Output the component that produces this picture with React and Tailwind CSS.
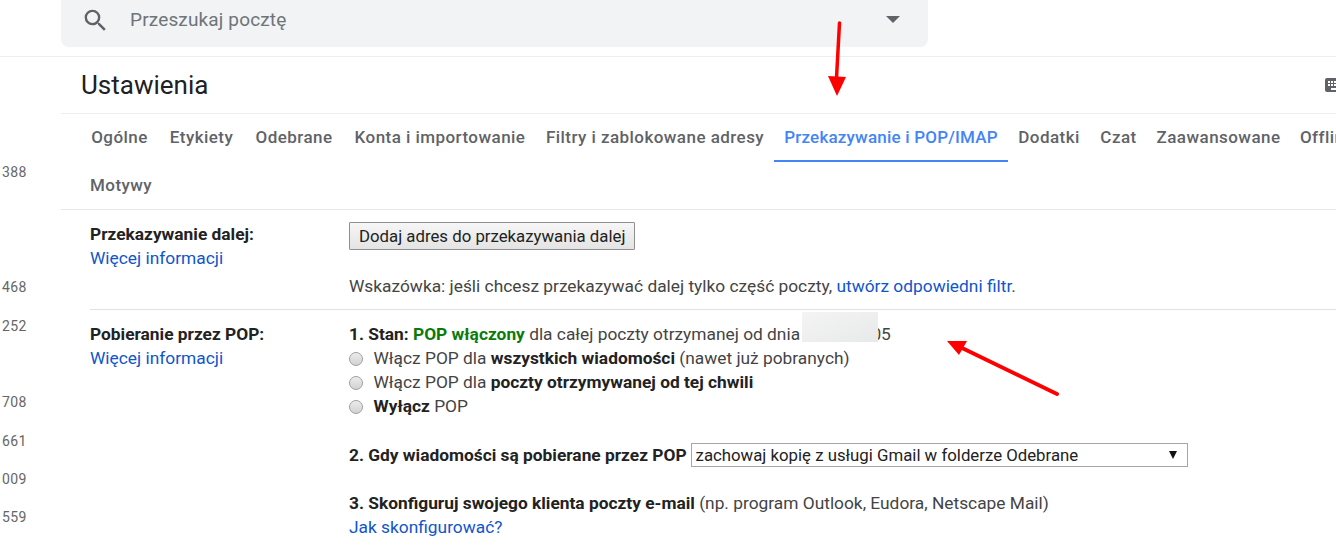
const tabs = [
  { label: "Ogólne", width: "w-[79px]" },
  { label: "Etykiety", width: "w-[85px]" },
  { label: "Odebrane", width: "w-[100px]" },
  { label: "Konta i importowanie", width: "w-[192px]" },
  { label: "Filtry i zablokowane adresy", width: "w-[238px]" },
  { label: "Przekazywanie i POP/IMAP", width: "w-[234px]", active: true },
  { label: "Dodatki", width: "w-[82px]" },
  { label: "Czat", width: "w-[57px]" },
  { label: "Zaawansowane", width: "w-[143px]" },
  { label: "Offline", width: "w-[74px]" },
];

function Radio() {
  return (
    <span className="w-[14px] h-[14px] mt-[2px] mr-[10.5px] rounded-full border border-[#a0a0a0] bg-gradient-to-b from-[#ececec] to-[#d2d2d2] shrink-0" />
  );
}

function Arrows() {
  return (
    <svg className="absolute left-0 top-0 pointer-events-none" width="1336" height="546">
      <path d="M839.5 23 L836.5 78" stroke="#ff0000" strokeWidth="3.5" strokeLinecap="round" fill="none" />
      <path d="M828 76 L846 77 L837 96 Z" fill="#ff0000" />
      <path d="M1057 394 L960 347" stroke="#ff0000" strokeWidth="4" strokeLinecap="round" fill="none" />
      <path d="M947 341 L967 341 L959 355 Z" fill="#ff0000" />
    </svg>
  );
}

export default function App() {
  return (
    <div className="relative w-[1336px] h-[546px] overflow-hidden bg-white text-[#444] font-['Roboto',sans-serif] text-[17.33px] leading-[24px]">
      {/* Search bar */}
      <div className="h-[57px] border-b border-[#eceff1] pl-[61px]">
        <div className="w-[867px] h-[47px] rounded-b-lg bg-[#f1f3f4] flex items-center pl-[20px] pr-[28px]">
          <svg width="29" height="29" viewBox="0 0 24 24" fill="#5f6368" className="mt-[-7px]">
            <path d="M15.5 14h-.79l-.28-.27A6.471 6.471 0 0 0 16 9.5 6.5 6.5 0 1 0 9.5 16c1.61 0 3.09-.59 4.23-1.57l.27.28v.79l5 4.99L20.49 19l-4.99-5zm-6 0C7.01 14 5 11.99 5 9.5S7.01 5 9.5 5 14 7.01 14 9.5 11.99 14 9.5 14z" />
          </svg>
          <span className="ml-[20px] flex-1 text-[19px] tracking-[0.15px] text-[#6f7479] mt-[-7px]">Przeszukaj pocztę</span>
          <span className="w-0 h-0 border-x-[7px] border-x-transparent border-t-[7px] border-t-[#5f6368] mt-[-8px]" />
        </div>
      </div>

      <div className="flex">
        {/* Row numbers left over from the mail list */}
        <div className="w-[61px] shrink-0 pl-[2px] text-[14px] leading-[16px] text-[#666] tracking-[0.4px] flex flex-col pt-[107px]">
          <span>388</span>
          <span className="mt-[99px]">468</span>
          <span className="mt-[23px]">252</span>
          <span className="mt-[60px]">708</span>
          <span className="mt-[23px]">661</span>
          <span className="mt-[22px]">009</span>
          <span className="mt-[22px]">559</span>
        </div>

        <div className="flex-1 min-w-0">
          {/* Title */}
          <div className="h-[57px] border-b border-[#eceff1] flex items-center pl-[20px] relative">
            <h1 className="text-[26px] font-normal text-[#202124]">Ustawienia</h1>
            <svg width="24" height="24" viewBox="0 0 24 24" fill="#5f6368" className="absolute left-[1262px] top-[16px]">
              <path d="M20 5H4c-1.1 0-1.99.9-1.99 2L2 17c0 1.1.9 2 2 2h16c1.1 0 2-.9 2-2V7c0-1.1-.9-2-2-2zm-9 3h2v2h-2V8zm0 3h2v2h-2v-2zM8 8h2v2H8V8zm0 3h2v2H8v-2zm-1 2H5v-2h2v2zm0-3H5V8h2v2zm9 7H8v-2h8v2zm0-4h-2v-2h2v2zm0-3h-2V8h2v2zm3 3h-2v-2h2v2zm0-3h-2V8h2v2z" />
            </svg>
          </div>

          {/* Tabs */}
          <div className="border-b border-[#e6e6e6] h-[96px] pl-[19px]">
            <div className="flex h-[48px] whitespace-nowrap text-[17px] font-medium text-[#5f6368]">
              {tabs.map((t) => (
                <span
                  key={t.label}
                  className={
                    t.active
                      ? `${t.width} shrink-0 flex items-center justify-center border-b-2 border-[#4285f4] text-[#4285f4] tracking-[0.2px]`
                      : `${t.width} shrink-0 flex items-center justify-center border-b-2 border-transparent tracking-[0.45px]`
                  }
                >
                  {t.label}
                </span>
              ))}
            </div>
            <div className="h-[48px] flex items-center px-[10px] pb-[2px] text-[17px] font-medium tracking-[0.45px] text-[#5f6368]">
              Motywy
            </div>
          </div>

          {/* Forwarding */}
          <div className="ml-[29px] flex border-b border-[#e2e2e2] h-[100px] pt-[12px]">
            <div className="w-[259px] shrink-0">
              <div className="font-bold text-[#222]">Przekazywanie dalej:</div>
              <a className="text-[#1155cc]">Więcej informacji</a>
            </div>
            <div>
              <button className="h-[28px] px-[9px] border border-[#8f8f8f] rounded-[1px] bg-gradient-to-b from-[#f6f6f6] to-[#e4e4e4] text-[16.8px] text-[#222]">
                Dodaj adres do przekazywania dalej
              </button>
              <p className="mt-[24px]">
                Wskazówka: jeśli chcesz przekazywać dalej tylko część poczty,{" "}
                <a className="text-[#1155cc]">utwórz odpowiedni filtr</a>.
              </p>
            </div>
          </div>

          {/* POP */}
          <div className="ml-[29px] flex pt-[12px]">
            <div className="w-[259px] shrink-0">
              <div className="font-bold text-[#222]">Pobieranie przez POP:</div>
              <a className="text-[#1155cc]">Więcej informacji</a>
            </div>
            <div className="min-w-0">
              <div className="relative whitespace-nowrap">
                <b className="text-[#222]">1. Stan: </b>
                <b className="text-[#0b7a0b]">POP włączony </b>
                dla całej poczty otrzymanej od dnia <span className="inline-block w-[67px]" />05
                <span className="absolute left-[453px] top-[-10px] w-[76px] h-[30px] bg-gradient-to-br from-[#f4f4f4] to-[#e8e9e9]" />
              </div>
              <label className="flex items-center">
                <Radio />
                <span>
                  Włącz POP dla <b className="text-[#222]">wszystkich wiadomości</b> (nawet już pobranych)
                </span>
              </label>
              <label className="flex items-center">
                <Radio />
                <span>
                  Włącz POP dla <b className="text-[#222]">poczty otrzymywanej od tej chwili</b>
                </span>
              </label>
              <label className="flex items-center">
                <Radio />
                <span>
                  <b className="text-[#222]">Wyłącz</b> POP
                </span>
              </label>

              <div className="mt-[25px] flex items-center whitespace-nowrap">
                <b className="text-[#222]">2. Gdy wiadomości są pobierane przez POP</b>
                <div className="ml-[4px] w-[497px] h-[24px] border border-[#a6a6a6] flex items-center justify-between pl-[4px] pr-[10px] text-[16.8px] text-[#222]">
                  <span>zachowaj kopię z usługi Gmail w folderze Odebrane</span>
                  <span className="w-0 h-0 border-x-[4px] border-x-transparent border-t-[8px] border-t-[#111]" />
                </div>
              </div>

              <div className="mt-[24px] whitespace-nowrap">
                <b className="text-[#222]">3. Skonfiguruj swojego klienta poczty e-mail</b> (np. program Outlook, Eudora, Netscape Mail)
              </div>
              <a className="text-[#1155cc]">Jak skonfigurować?</a>
            </div>
          </div>
        </div>
      </div>

      <Arrows />
    </div>
  );
}
